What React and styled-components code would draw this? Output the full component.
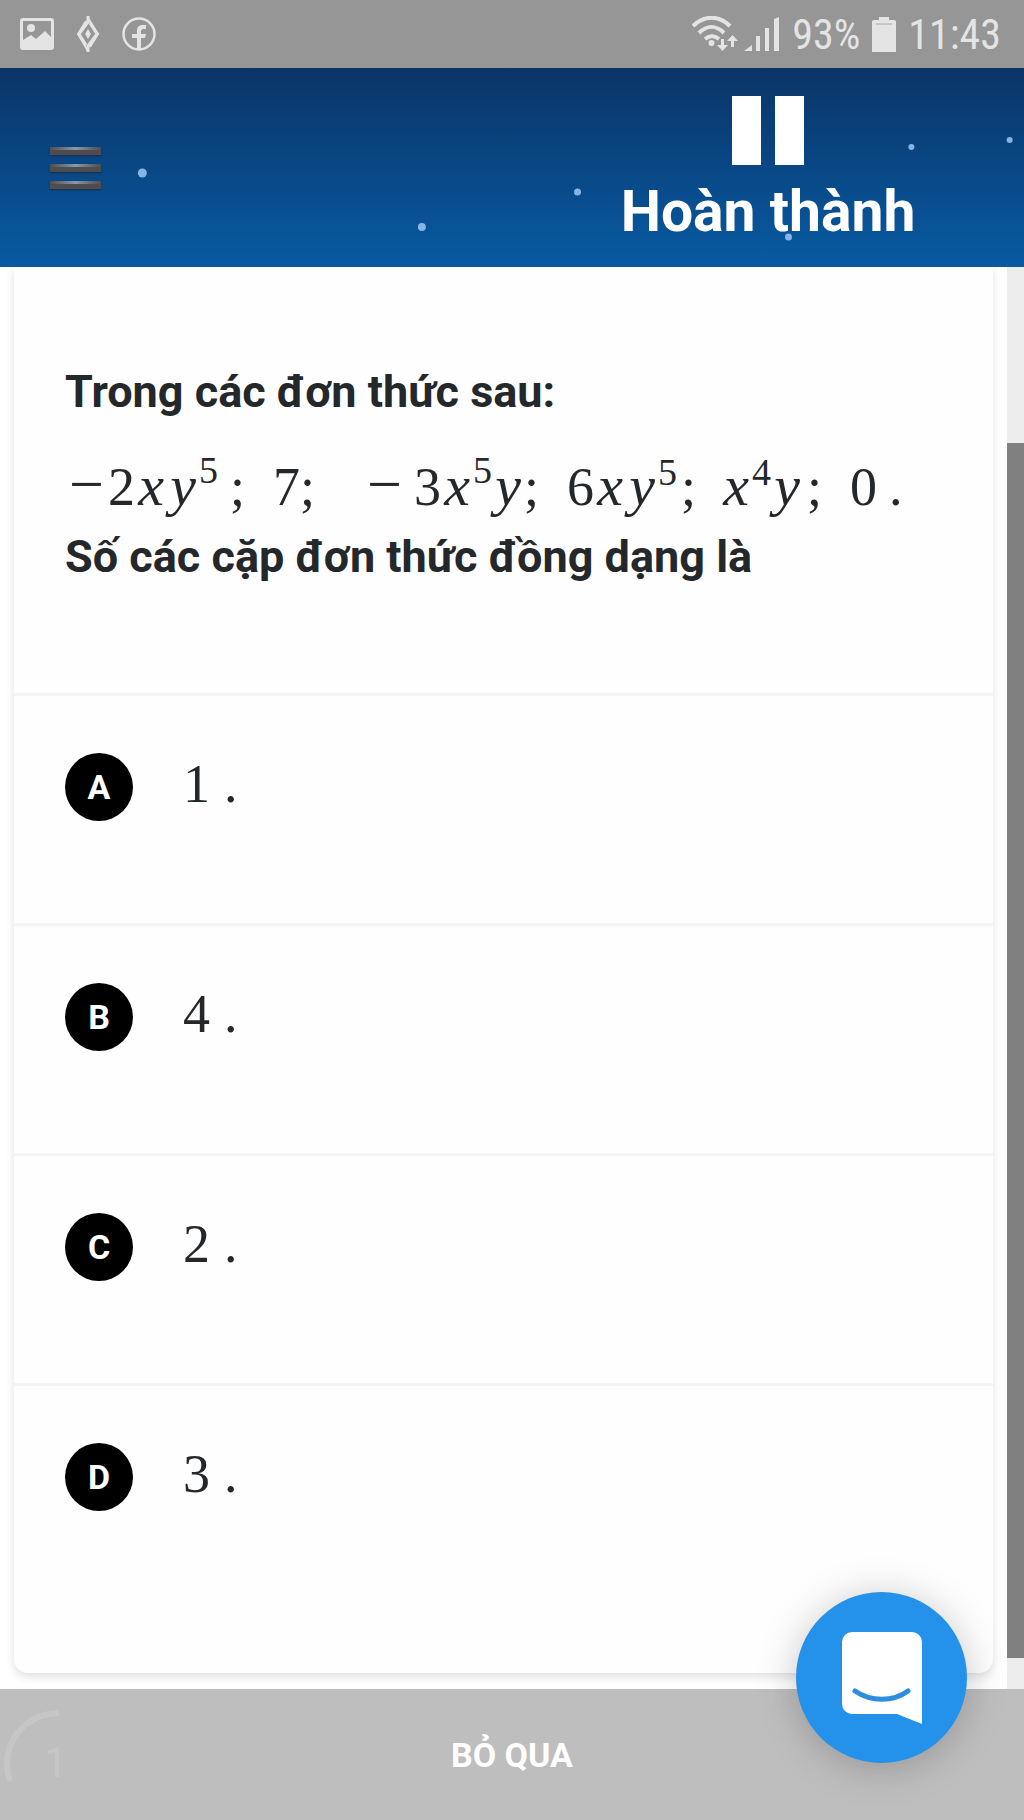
// src/App.jsx
import styled, { createGlobalStyle } from "styled-components";

const STARS = [
  { x: "13.9%", y: 105, r: 4.5 },
  { x: "41.2%", y: 159, r: 4 },
  { x: "56.4%", y: 124, r: 3.5 },
  { x: "77%", y: 169, r: 3.5 },
  { x: "89%", y: 79, r: 3 },
  { x: "98.6%", y: 72, r: 3 },
];

const TERMS = [
  { minus: true, parts: ["2", "x", "y", "^5"], sep: ";", before: 12, after: 28 },
  { parts: ["7"], sep: ";", after: 48 },
  { minus: true, minusGap: 8, parts: ["3", "x", "^5", "y"], sep: ";", after: 28 },
  { parts: ["6", "x", "y", "^5"], sep: ";", before: 4, after: 24 },
  { parts: ["x", "^4", "y"], sep: ";", before: 4, after: 28 },
  { parts: ["0"], sep: ".", before: 12 },
];

const ANSWERS = [
  { key: "A", value: "1" },
  { key: "B", value: "4" },
  { key: "C", value: "2" },
  { key: "D", value: "3" },
];

export default function App() {
  return (
    <>
      <GlobalStyle />
      <Screen>
        <StatusBar />
        <Header>
          <Sky aria-hidden="true">
            {STARS.map((s) => (
              <circle key={s.x} cx={s.x} cy={s.y} r={s.r} />
            ))}
          </Sky>
          <HeaderHalf>
            <MenuButton type="button" aria-label="Menu">
              <MenuLine />
              <MenuLine />
              <MenuLine />
            </MenuButton>
          </HeaderHalf>
          <HeaderHalf $center>
            <PauseButton type="button" aria-label="Tạm dừng">
              <PauseBar />
              <PauseBar />
            </PauseButton>
            <FinishButton type="button">Hoàn thành</FinishButton>
          </HeaderHalf>
        </Header>

        <Body>
          <Card>
            <Question>
              <p>Trong các đơn thức sau:</p>
              <Formula>
                {TERMS.map((term, i) => (
                  <Term key={i} term={term} />
                ))}
              </Formula>
              <p>Số các cặp đơn thức đồng dạng là</p>
            </Question>
            {ANSWERS.map((a) => (
              <Answer key={a.key} type="button">
                <Badge>{a.key}</Badge>
                <AnswerText>
                  <span>{a.value}</span>
                  <span>.</span>
                </AnswerText>
              </Answer>
            ))}
          </Card>
          <ScrollTrack>
            <ScrollThumb />
          </ScrollTrack>
        </Body>

        <Footer>
          <Timer>
            <svg width="64" height="78" viewBox="0 0 64 78" fill="none" aria-hidden="true">
              <path d="M59 4C27 5 7 29 7 55c0 6 1 12 3 17" stroke="#c6c6c6" strokeWidth="6" />
            </svg>
            <TimerValue>1</TimerValue>
          </Timer>
          <SkipButton type="button">BỎ QUA</SkipButton>
        </Footer>

        <ChatButton type="button" aria-label="Chat">
          <svg width="82" height="92" viewBox="0 0 82 92" fill="none" aria-hidden="true">
            <path d="M11 0h60a10 10 0 0 1 10 10v82L56 82H11A10 10 0 0 1 1 72V10A10 10 0 0 1 11 0Z" fill="#fff" />
            <path d="M14 59c16 11 38 11 53 0" stroke="#2f8ddd" strokeWidth="5" strokeLinecap="round" />
          </svg>
        </ChatButton>
      </Screen>
    </>
  );
}

function StatusBar() {
  return (
    <Status>
      <StatusGroup $gap={22}>
        <svg width="34" height="32" viewBox="0 0 34 32" aria-hidden="true">
          <path
            fillRule="evenodd"
            fill="currentColor"
            d="M3 0h28a3 3 0 0 1 3 3v26a3 3 0 0 1-3 3H3a3 3 0 0 1-3-3V3a3 3 0 0 1 3-3Zm0 3v19l8-5 5 4 9-8 6 6V3Z"
          />
          <circle cx="11" cy="10" r="4" fill="currentColor" />
        </svg>
        <svg width="24" height="38" viewBox="0 0 24 38" fill="none" stroke="currentColor" aria-hidden="true">
          <path d="M12 1v6L3 19l7 11M12 37v-6l9-12-7-11" strokeWidth="3" />
          <path d="M10 6 2 19l10 17M14 32l8-13L12 3" strokeWidth="2" />
          <path d="m12 14-3 5 3 5 3-5Z" fill="currentColor" stroke="none" />
        </svg>
        <svg width="34" height="34" viewBox="0 0 34 34" aria-hidden="true">
          <circle cx="17" cy="17" r="15.5" fill="none" stroke="currentColor" strokeWidth="2.5" />
          <path
            fill="currentColor"
            d="M15 33V21h-5v-4h5v-3c0-4 2-6 6-6h3v4h-3c-1 0-2 1-2 2v3h5l-1 4h-4v12Z"
          />
        </svg>
      </StatusGroup>
      <StatusGroup $gap={12}>
        <svg width="88" height="36" viewBox="0 0 88 36" fill="none" aria-hidden="true">
          <g stroke="currentColor" strokeWidth="4">
            <path d="M1 10C12-1 27-1 38 10" />
            <path d="M7 17c8-8 17-8 25 0" />
            <path d="M13 23c5-4 9-4 14 0" />
          </g>
          <circle cx="19.5" cy="27" r="3" fill="currentColor" />
          <g fill="currentColor">
            <path d="M29 23h3v6h4l-5.500 6-5.500-6h4Z" />
            <path d="M39 31v-6h-4l5.500-6 5.500 6h-4v6Z" />
            <path d="M52 35l8-6v6Z" />
            <path d="M64 20h4v15h-4Z" />
            <path d="M73 12h4v23h-4Z" />
            <path d="M82 3l5-2v34h-5Z" />
          </g>
        </svg>
        <span>93%</span>
        <svg width="24" height="36" viewBox="0 0 24 36" fill="currentColor" aria-hidden="true">
          <path d="M7 1h10v3h5a2 2 0 0 1 2 2v30H0V6a2 2 0 0 1 2-2h5Z" />
          <path d="M4 8h16" stroke="#c8c8c8" strokeWidth="2" />
        </svg>
        <span>11:43</span>
      </StatusGroup>
    </Status>
  );
}

function Term({ term }) {
  return (
    <TermBox $after={term.after}>
      {term.minus && <Minus $gap={term.minusGap}>−</Minus>}
      {term.parts.map((p, i) => {
        if (p.startsWith("^")) return <Power key={i}>{p.slice(1)}</Power>;
        if (/[a-z]/.test(p)) return <Variable key={i}>{p}</Variable>;
        return <span key={i}>{p}</span>;
      })}
      <Separator $before={term.before}>{term.sep}</Separator>
    </TermBox>
  );
}

/* === base === */
const GlobalStyle = createGlobalStyle`
  * { box-sizing: border-box; }
  body {
    margin: 0;
    background: #fff;
    color: #25282b;
    font-family: Roboto, "Liberation Sans", sans-serif;
  }
  button {
    margin: 0;
    padding: 0;
    border: 0;
    background: none;
    color: inherit;
    font: inherit;
    cursor: pointer;
  }
  p { margin: 0; }
  svg { display: block; }
`;

const Screen = styled.div`
  display: flex;
  flex-direction: column;
  min-height: 100vh;
`;

/* === status bar === */
const Status = styled.div`
  display: flex;
  align-items: center;
  justify-content: space-between;
  height: 68px;
  padding: 0 23px 0 20px;
  background: #969696;
  color: #e4e4e4;
  font-family: "Roboto Condensed", Roboto, sans-serif;
  font-size: 42px;
`;

const StatusGroup = styled.div`
  display: flex;
  align-items: center;
  gap: ${(p) => p.$gap}px;
`;

/* === header === */
const Header = styled.header`
  position: relative;
  display: grid;
  grid-template-columns: 1fr 1fr;
  height: 199px;
  background: linear-gradient(#0a3567, #085aa3);
`;

const Sky = styled.svg`
  position: absolute;
  inset: 0;
  width: 100%;
  height: 100%;
  fill: #86b4e4;
  pointer-events: none;
`;

const HeaderHalf = styled.div`
  display: flex;
  flex-direction: column;
  align-items: ${(p) => (p.$center ? "center" : "flex-start")};
  padding: ${(p) => (p.$center ? "28px 0 0" : "79px 0 0 50px")};
`;

const MenuButton = styled.button`
  display: flex;
  flex-direction: column;
  gap: 9px;
  width: 51px;
`;

const MenuLine = styled.span`
  height: 8px;
  background:
    linear-gradient(90deg, transparent, #8b98a8, transparent) top / 100% 3px no-repeat,
    #4d4d50;
  box-shadow: 0 1px 2px #1c2c44;
`;

const PauseButton = styled.button`
  display: flex;
  gap: 14px;
`;

const PauseBar = styled.span`
  width: 29px;
  height: 69px;
  background: #fff;
`;

const FinishButton = styled.button`
  margin-top: 13px;
  color: #fff;
  font-size: 57px;
  font-weight: 700;
  line-height: 68px;
`;

/* === question card === */
const Body = styled.main`
  flex: 1;
  display: flex;
  gap: 14px;
  padding-left: 14px;
`;

const Card = styled.section`
  flex: 1;
  display: flex;
  flex-direction: column;
  margin-bottom: 16px;
  border-radius: 0 0 14px 14px;
  background: #fefefe;
  box-shadow: 0 4px 10px rgba(0, 0, 0, 0.12);
`;

const Question = styled.div`
  padding: 97px 51px 108px;
  font-size: 45px;
  font-weight: 700;
  line-height: 56px;
`;

const Formula = styled.div`
  display: flex;
  align-items: baseline;
  height: 109px;
  padding-top: 32px;
  font-family: "Liberation Serif", serif;
  font-size: 54px;
  font-weight: 400;
  line-height: 64px;
  white-space: nowrap;
`;

const TermBox = styled.span`
  display: flex;
  align-items: baseline;
  margin-right: ${(p) => p.$after || 0}px;
`;

const Minus = styled.span`
  width: 43px;
  margin-right: ${(p) => p.$gap || 0}px;
  font-size: 62px;
  text-align: center;
`;

const Variable = styled.i`
  width: 32px;
  font-size: 58px;
  text-align: center;
`;

const Power = styled.sup`
  align-self: flex-start;
  font-size: 38px;
  line-height: 36px;
`;

const Separator = styled.span`
  margin-left: ${(p) => p.$before || 0}px;
`;

const Answer = styled.button`
  display: flex;
  align-items: flex-start;
  gap: 50px;
  min-height: 230px;
  padding: 57px 51px;
  border-top: 3px solid #f4f4f4;
  text-align: left;

  &:last-child {
    flex: 1;
  }
`;

const Badge = styled.span`
  display: grid;
  place-items: center;
  width: 68px;
  height: 68px;
  border-radius: 50%;
  background: #000;
  color: #fff;
  font-size: 34px;
  font-weight: 700;
`;

const AnswerText = styled.span`
  display: flex;
  gap: 14px;
  font-family: "Liberation Serif", serif;
  font-size: 54px;
  line-height: 62px;
`;

/* === scrollbar === */
const ScrollTrack = styled.div`
  display: flex;
  width: 17px;
  padding: 176px 0 31px;
  background: #ededed;
`;

const ScrollThumb = styled.div`
  flex: 1;
  background: #808080;
`;

/* === footer === */
const Footer = styled.footer`
  display: grid;
  grid-template-columns: 1fr auto 1fr;
  align-items: center;
  height: 131px;
  background: #bebebe;
`;

const Timer = styled.div`
  position: relative;
  align-self: start;
  padding-top: 20px;
`;

const TimerValue = styled.span`
  position: absolute;
  left: 44px;
  top: 50px;
  color: #c6c6c6;
  font-size: 42px;
  line-height: 48px;
`;

const SkipButton = styled.button`
  color: #fdfdfd;
  font-size: 34px;
  font-weight: 700;
`;

const ChatButton = styled.button`
  position: fixed;
  right: 57px;
  bottom: 57px;
  display: flex;
  justify-content: center;
  width: 171px;
  height: 171px;
  && {
    padding-top: 40px;
    background: #2491eb;
  }
  border-radius: 50%;
  box-shadow: 0 4px 40px rgba(0, 0, 0, 0.22);
`;
